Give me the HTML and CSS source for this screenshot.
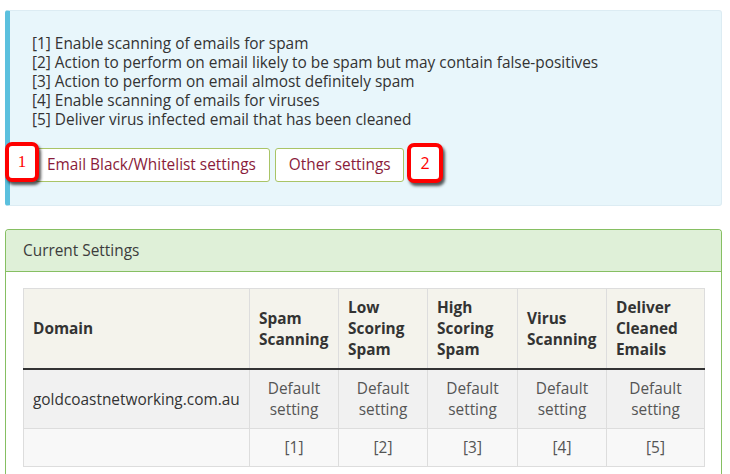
FILE: index.html
```html
<!DOCTYPE html>
<html>
<head>
<meta charset="utf-8">
<link rel="stylesheet" href="styles.css">
</head>
<body>
<div class="page">
  <div class="info">
    <div class="notes">
      <div>[1] Enable scanning of emails for spam</div>
      <div>[2] Action to perform on email likely to be spam but may contain false-positives</div>
      <div>[3] Action to perform on email almost definitely spam</div>
      <div>[4] Enable scanning of emails for viruses</div>
      <div>[5] Deliver virus infected email that has been cleaned</div>
    </div>
    <div class="buttons">
      <a class="btn">Email Black/Whitelist settings</a>
      <a class="btn">Other settings</a>
    </div>
  </div>

  <div class="panel">
    <div class="panel-head">Current Settings</div>
    <div class="panel-body">
      <table class="grid">
        <colgroup>
          <col class="c-domain"><col class="c-n"><col class="c-n"><col class="c-w"><col class="c-n"><col class="c-x">
        </colgroup>
        <thead>
          <tr>
            <th>Domain</th>
            <th>Spam Scanning</th>
            <th>Low Scoring Spam</th>
            <th>High Scoring Spam</th>
            <th>Virus Scanning</th>
            <th>Deliver Cleaned Emails</th>
          </tr>
        </thead>
        <tbody>
          <tr class="r1">
            <td class="dom">goldcoastnetworking.com.au</td>
            <td>Default setting</td>
            <td>Default setting</td>
            <td>Default setting</td>
            <td>Default setting</td>
            <td>Default setting</td>
          </tr>
          <tr class="r2">
            <td></td>
            <td>[1]</td>
            <td>[2]</td>
            <td>[3]</td>
            <td>[4]</td>
            <td>[5]</td>
          </tr>
        </tbody>
      </table>
    </div>
  </div>

  <div class="badge b1">1</div>
  <div class="badge b2">2</div>
</div>
</body>
</html>
```

FILE: styles.css
```css
html, body {
  margin: 0;
  padding: 0;
  background: #ffffff;
}
body {
  font-family: "Open Sans", "DejaVu Sans", sans-serif;
  font-size: 15.4px;
  color: #333333;
}
.page {
  position: relative;
  padding: 10px 8px 0 5px;
}
.info {
  background: #e8f6fb;
  border: 1px solid #dcecf3;
  border-left: 5px solid #5bc0de;
  border-radius: 3px;
  padding: 23px 20px 23px 22px;
}
.notes {
  line-height: 19px;
  color: #333;
}
.buttons {
  display: flex;
  gap: 5px;
  margin-top: 19px;
  padding-left: 3px;
}
.btn {
  display: block;
  height: 32px;
  line-height: 32px;
  padding: 0 13px 0 11px;
  border: 1px solid #a9c466;
  border-radius: 3px;
  background: #ffffff;
  color: #8a1c3a;
  text-decoration: none;
}
.btn + .btn {
  padding: 0 12px 0 13px;
}
.panel {
  margin-top: 23px;
  border: 1px solid #86bf62;
  border-bottom: none;
  border-radius: 4px 4px 0 0;
}
.panel-head {
  background: #dff0d8;
  border-bottom: 1px solid #86bf62;
  height: 41px;
  line-height: 41px;
  padding-left: 17px;
  color: #3c3c3c;
  border-radius: 3px 3px 0 0;
}
.panel-body {
  padding: 16px 17px 8px 17px;
}
.grid {
  border-collapse: collapse;
  table-layout: fixed;
  width: 681px;
}
.c-domain { width: 226px; }
.c-n { width: 89px; }
.c-w { width: 90px; }
.c-x { width: 98px; }
.grid th, .grid td {
  border: 1px solid #dddddd;
  line-height: 21px;
  padding: 8px 9px;
}
.grid th {
  background: #f4f3ec;
  text-align: left;
  font-weight: bold;
  color: #333;
  vertical-align: middle;
  height: 62px;
  border-bottom: 2px solid #333333;
}
.grid td {
  text-align: center;
  color: #555555;
}
.grid td.dom {
  text-align: left;
  color: #333;
}
.r1 td { background: #f1f1f1; }
.r2 td { background: #f8f8f8; }
.badge {
  position: absolute;
  box-sizing: border-box;
  border: 4px solid #ff0000;
  border-radius: 7px;
  background: #ffffff;
  color: #ff0000;
  font-size: 16px;
  display: flex;
  align-items: center;
  justify-content: center;
  box-shadow: 2px 3px 3px rgba(0, 0, 0, 0.65);
}
.b1 {
  left: 5px;
  top: 142px;
  width: 34px;
  height: 40px;
  font-family: "Liberation Serif", serif;
  font-size: 17px;
}
.b2 {
  left: 407px;
  top: 143px;
  width: 36px;
  height: 40px;
  font-family: "Open Sans", sans-serif;
}
```
